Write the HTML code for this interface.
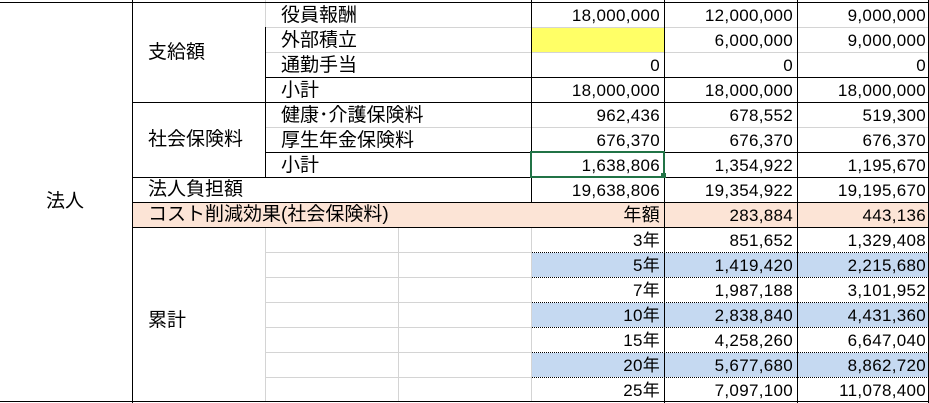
<!DOCTYPE html>
<html><head><meta charset="utf-8"><style>
body{margin:0;width:929px;height:403px;background:#fff;overflow:hidden;position:relative;font-family:"Liberation Sans","Noto Sans CJK JP",sans-serif;font-size:19px;color:#000}
.l{position:absolute;background:#000}
.g{position:absolute;background:#d4d4d4}
.d{position:absolute;height:0;border-top:1px dotted #000}
.f{position:absolute}
.t{position:absolute;line-height:25px;white-space:nowrap}
.r{position:absolute;line-height:25px;text-align:right;white-space:nowrap;font-size:17px;letter-spacing:0.3px}
</style></head><body>
<div class="f" style="left:532px;top:28px;width:132px;height:24px;background:#ffff66"></div>
<div class="f" style="left:133px;top:203px;width:796px;height:24px;background:#fce4d6"></div>
<div class="f" style="left:532px;top:253px;width:397px;height:24px;background:#c5d9f1"></div>
<div class="f" style="left:532px;top:303px;width:397px;height:24px;background:#c5d9f1"></div>
<div class="f" style="left:532px;top:353px;width:397px;height:24px;background:#c5d9f1"></div>
<div class="g" style="left:266px;top:27px;width:663px;height:1px"></div>
<div class="g" style="left:266px;top:52px;width:663px;height:1px"></div>
<div class="g" style="left:266px;top:127px;width:663px;height:1px"></div>
<div class="g" style="left:266px;top:252px;width:266px;height:1px"></div>
<div class="g" style="left:266px;top:277px;width:266px;height:1px"></div>
<div class="g" style="left:266px;top:302px;width:266px;height:1px"></div>
<div class="g" style="left:266px;top:327px;width:266px;height:1px"></div>
<div class="g" style="left:266px;top:352px;width:266px;height:1px"></div>
<div class="g" style="left:266px;top:377px;width:266px;height:1px"></div>
<div class="g" style="left:265px;top:0px;width:1px;height:27px"></div>
<div class="g" style="left:265px;top:228px;width:1px;height:174px"></div>
<div class="g" style="left:398px;top:228px;width:1px;height:174px"></div>
<div class="g" style="left:531px;top:228px;width:1px;height:174px"></div>
<div class="d" style="left:532px;top:252px;width:397px"></div>
<div class="d" style="left:532px;top:277px;width:397px"></div>
<div class="d" style="left:532px;top:302px;width:397px"></div>
<div class="d" style="left:532px;top:327px;width:397px"></div>
<div class="d" style="left:532px;top:352px;width:397px"></div>
<div class="d" style="left:532px;top:377px;width:397px"></div>
<div class="l" style="left:0;top:2px;width:929px;height:1px"></div>
<div class="l" style="left:0;top:401px;width:929px;height:1px"></div>
<div class="l" style="left:132px;top:0;width:1px;height:403px"></div>
<div class="l" style="left:265px;top:27px;width:1px;height:150px"></div>
<div class="l" style="left:531px;top:0;width:1px;height:202px"></div>
<div class="l" style="left:664px;top:0;width:1px;height:403px"></div>
<div class="l" style="left:797px;top:0;width:1px;height:403px"></div>
<div class="l" style="left:928px;top:0;width:1px;height:403px"></div>
<div class="l" style="left:266px;top:77px;width:663px;height:1px"></div>
<div class="l" style="left:133px;top:102px;width:796px;height:1px"></div>
<div class="l" style="left:266px;top:152px;width:663px;height:1px"></div>
<div class="l" style="left:133px;top:177px;width:796px;height:1px"></div>
<div class="l" style="left:133px;top:202px;width:796px;height:1px"></div>
<div class="l" style="left:133px;top:227px;width:796px;height:1px"></div>
<div class="f" style="left:530px;top:151px;border:2px solid #217346;box-sizing:border-box;width:135px;height:27px"></div>
<div class="f" style="left:661px;top:173px;width:5px;height:5px;background:#217346"></div>
<div class="t" style="left:46px;top:189px">法人</div>
<div class="t" style="left:148px;top:40px">支給額</div>
<div class="t" style="left:148px;top:127px">社会保険料</div>
<div class="t" style="left:148px;top:177px">法人負担額</div>
<div class="t" style="left:148px;top:202px">コスト削減効果(社会保険料)</div>
<div class="t" style="left:148px;top:308px">累計</div>
<div class="t" style="left:281px;top:3px">役員報酬</div>
<div class="t" style="left:281px;top:28px">外部積立</div>
<div class="t" style="left:281px;top:53px">通勤手当</div>
<div class="t" style="left:281px;top:78px">小計</div>
<div class="t" style="left:281px;top:103px">健康･介護保険料</div>
<div class="t" style="left:281px;top:128px">厚生年金保険料</div>
<div class="t" style="left:281px;top:153px">小計</div>
<div class="r" style="left:532px;width:128px;top:3px">18,000,000</div>
<div class="r" style="left:665px;width:128px;top:3px">12,000,000</div>
<div class="r" style="left:798px;width:128px;top:3px">9,000,000</div>
<div class="r" style="left:665px;width:128px;top:28px">6,000,000</div>
<div class="r" style="left:798px;width:128px;top:28px">9,000,000</div>
<div class="r" style="left:532px;width:128px;top:53px">0</div>
<div class="r" style="left:665px;width:128px;top:53px">0</div>
<div class="r" style="left:798px;width:128px;top:53px">0</div>
<div class="r" style="left:532px;width:128px;top:78px">18,000,000</div>
<div class="r" style="left:665px;width:128px;top:78px">18,000,000</div>
<div class="r" style="left:798px;width:128px;top:78px">18,000,000</div>
<div class="r" style="left:532px;width:128px;top:103px">962,436</div>
<div class="r" style="left:665px;width:128px;top:103px">678,552</div>
<div class="r" style="left:798px;width:128px;top:103px">519,300</div>
<div class="r" style="left:532px;width:128px;top:128px">676,370</div>
<div class="r" style="left:665px;width:128px;top:128px">676,370</div>
<div class="r" style="left:798px;width:128px;top:128px">676,370</div>
<div class="r" style="left:532px;width:128px;top:153px">1,638,806</div>
<div class="r" style="left:665px;width:128px;top:153px">1,354,922</div>
<div class="r" style="left:798px;width:128px;top:153px">1,195,670</div>
<div class="r" style="left:532px;width:128px;top:178px">19,638,806</div>
<div class="r" style="left:665px;width:128px;top:178px">19,354,922</div>
<div class="r" style="left:798px;width:128px;top:178px">19,195,670</div>
<div class="r" style="left:532px;width:128px;top:203px;font-size:18px">年額</div>
<div class="r" style="left:665px;width:128px;top:203px">283,884</div>
<div class="r" style="left:798px;width:128px;top:203px">443,136</div>
<div class="r" style="left:532px;width:128px;top:228px">3年</div>
<div class="r" style="left:665px;width:128px;top:228px">851,652</div>
<div class="r" style="left:798px;width:128px;top:228px">1,329,408</div>
<div class="r" style="left:532px;width:128px;top:253px">5年</div>
<div class="r" style="left:665px;width:128px;top:253px">1,419,420</div>
<div class="r" style="left:798px;width:128px;top:253px">2,215,680</div>
<div class="r" style="left:532px;width:128px;top:278px">7年</div>
<div class="r" style="left:665px;width:128px;top:278px">1,987,188</div>
<div class="r" style="left:798px;width:128px;top:278px">3,101,952</div>
<div class="r" style="left:532px;width:128px;top:303px">10年</div>
<div class="r" style="left:665px;width:128px;top:303px">2,838,840</div>
<div class="r" style="left:798px;width:128px;top:303px">4,431,360</div>
<div class="r" style="left:532px;width:128px;top:328px">15年</div>
<div class="r" style="left:665px;width:128px;top:328px">4,258,260</div>
<div class="r" style="left:798px;width:128px;top:328px">6,647,040</div>
<div class="r" style="left:532px;width:128px;top:353px">20年</div>
<div class="r" style="left:665px;width:128px;top:353px">5,677,680</div>
<div class="r" style="left:798px;width:128px;top:353px">8,862,720</div>
<div class="r" style="left:532px;width:128px;top:378px">25年</div>
<div class="r" style="left:665px;width:128px;top:378px">7,097,100</div>
<div class="r" style="left:798px;width:128px;top:378px">11,078,400</div>
</body></html>
